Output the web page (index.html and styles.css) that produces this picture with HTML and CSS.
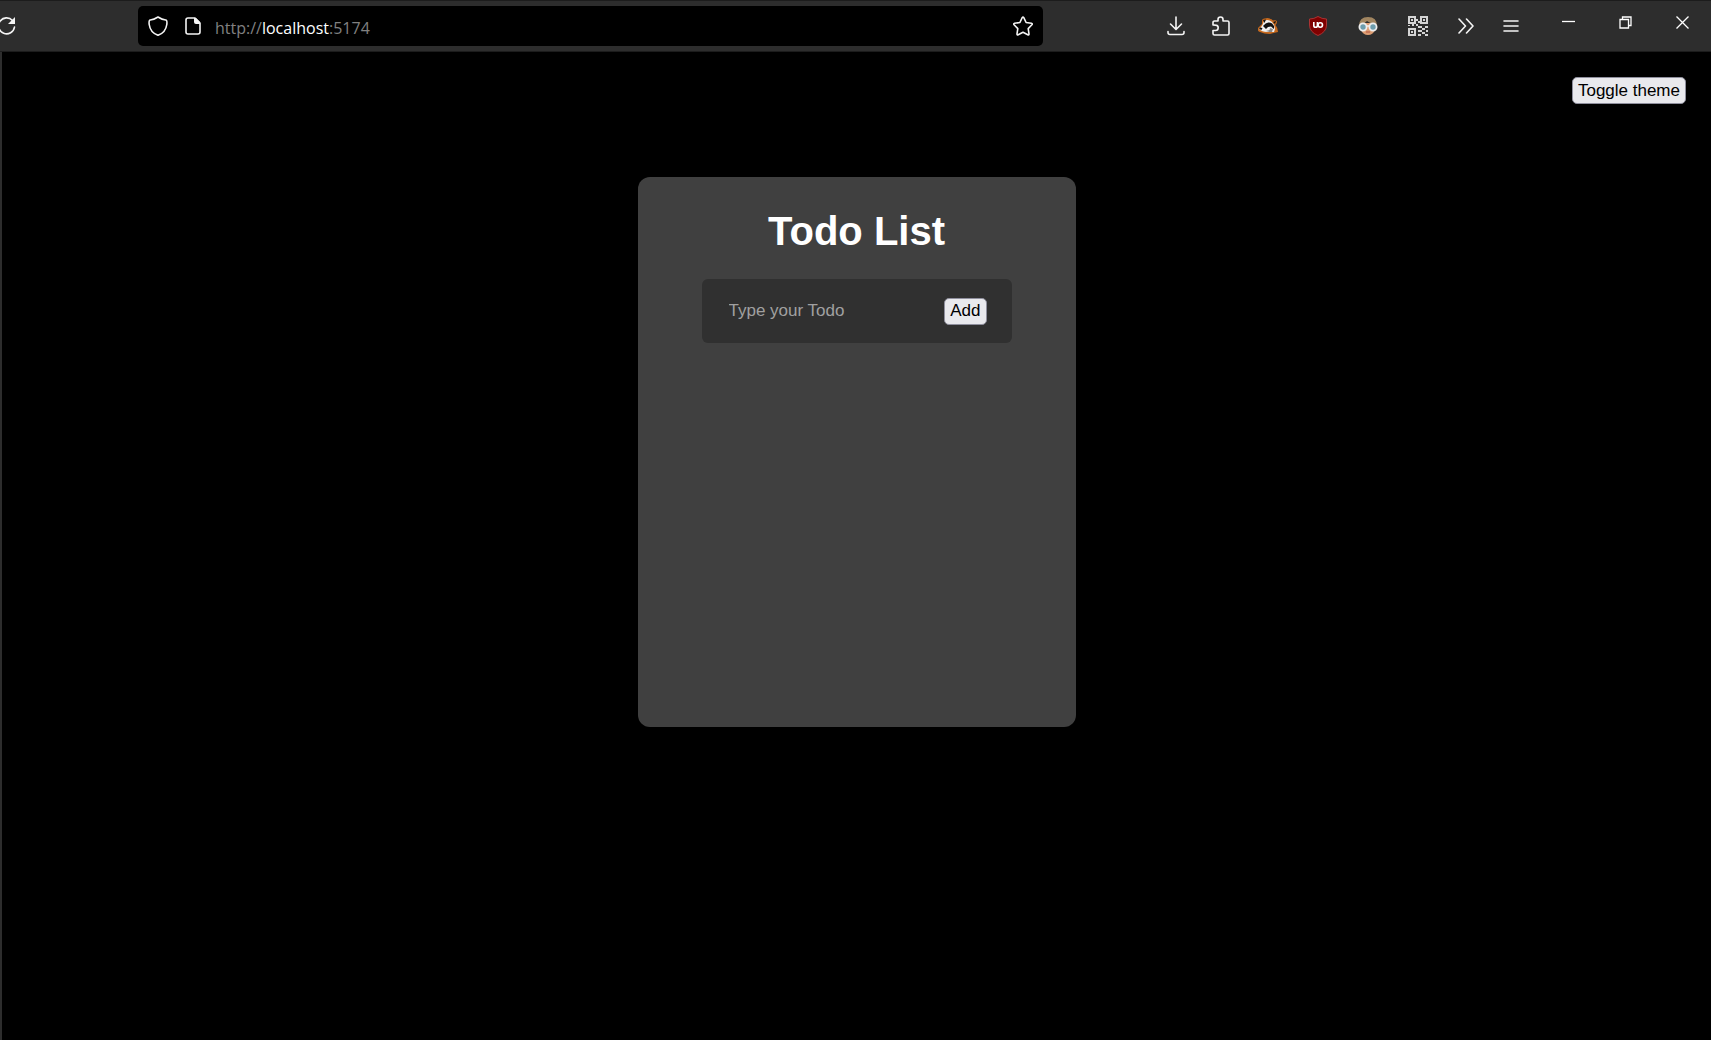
FILE: index.html
```html
<!DOCTYPE html>
<html lang="en">
<head>
<meta charset="utf-8">
<title>Todo List</title>
<link rel="stylesheet" href="styles.css">
</head>
<body>
<header class="toolbar">
  <button class="tool reload" aria-label="Reload">
    <svg width="20" height="20" viewBox="0 0 20 20"><path class="line" d="M17.500 11A8 8 0 1 1 15.500 4.500"/><path class="solid" d="M18 1v7h-7z"/></svg>
  </button>
  <div class="urlbar">
    <button class="bar-icon" aria-label="Tracking protection">
      <svg width="20" height="20" viewBox="0 0 20 20"><path class="line" d="M10 1C7 3 4.500 3.800 2.200 4c-1.500.2-1.300 2-1 4.500C1.800 13 5 17.500 10 19.300c5-1.800 8.200-6.300 8.800-10.800.3-2.500.5-4.300-1-4.500C15.500 3.800 13 3 10 1z"/></svg>
    </button>
    <button class="bar-icon" aria-label="Page information">
      <svg width="16" height="18" viewBox="0 0 16 18"><path class="line" d="M3 1h7l5 5v9a2 2 0 0 1-2 2H3a2 2 0 0 1-2-2V3a2 2 0 0 1 2-2z"/><path class="solid" d="M9 1h2l4 4v2h-4a2 2 0 0 1-2-2z"/></svg>
    </button>
    <div class="url">http://<span class="host">localhost</span>:5174</div>
    <button class="bar-icon" aria-label="Bookmark this page">
      <svg width="20" height="20" viewBox="0 0 20 20"><path class="line" d="M9.200 1.600q.8-1.200 1.600 0l2.300 4.900 5.300.8q1.400.4.500 1.500L15.200 12.600l.8 5.300q0 1.300-1.200.8L10 16.200l-4.800 2.500q-1.200.5-1.200-.8l.8-5.300L1.100 8.800Q.2 7.700 1.600 7.300l5.300-.8z"/></svg>
    </button>
  </div>
  <button class="tool" aria-label="Downloads">
    <svg width="18" height="20" viewBox="0 0 18 20"><path class="line" d="M9 1v12M3.500 8L9 13.500 14.500 8M1 15.500v1A2 2 0 0 0 3 18.500h12a2 2 0 0 0 2-2v-1"/></svg>
  </button>
  <button class="tool" aria-label="Extensions">
    <svg width="18" height="20" viewBox="0 0 18 20"><path class="line" d="M1 9V6.500A1.500 1.500 0 0 1 2.500 5H6V3.500a2.500 2.500 0 0 1 5 0V5h4.500A1.500 1.500 0 0 1 17 6.500V17.500A1.500 1.500 0 0 1 15.500 19h-13A1.500 1.500 0 0 1 1 17.500V14.500h2.500a2.700 2.700 0 0 0 0-5.400z"/></svg>
  </button>
  <button class="tool addon" aria-label="Privacy Badger">
    <svg width="20" height="18" viewBox="0 0 20 18"><path fill="#c86a1e" d="M4 3Q5 1 7 1.500 11 0 15 3.500q3-1 4 1 0 2-1.500 3.500 2.500 3 2.500 7-5 1-8 2-6 0-10-2-3-1-2-4 2-2 4-4z"/><path fill="#f0f0f0" d="M6 4q4-2.500 8 1 3 3 3 7l-1 3H9q-5 0-8-3 3-2 5-8z"/><path fill="#111" d="M5 3l3-.5L6.500 6zM2 10.500l2.500.5-1 2L1 12zM5 9q3-4 6-3.500 3 0 5 3.500v3l-3-2.500-3 .5-2 2zM15 5l3-1-1 3zM8 14l4-.5v1z"/><path fill="#888" d="M12 11l3 1-1 3h-3z"/></svg>
  </button>
  <button class="tool addon" aria-label="uBlock Origin">
    <svg width="18" height="20" viewBox="0 0 18 20"><path fill="#800000" stroke="#a33" d="M9 .5q4 2.500 8.500 2.500v6q0 7-8.500 10.500Q.5 16 .5 9V3Q5 3 9 .5z"/><path fill="none" stroke="#fff" stroke-width="1.600" d="M4.800 6v3.500a1.800 1.800 0 0 0 3.600 0V6M8.400 10.500V7.500"/><circle cx="11.300" cy="9" r="2.200" fill="none" stroke="#fff" stroke-width="1.600"/></svg>
  </button>
  <button class="tool addon" aria-label="Reader">
    <svg width="20" height="18" viewBox="0 0 20 18"><path fill="#dc9c72" d="M3 6h14v7q-2 5-7 5t-7-5z"/><path fill="#a18560" d="M1 9Q1 0 10 0t9 9h-4q-3-4-6-5Q7 5 5 9z"/><circle cx="5" cy="10" r="3.600" fill="#6d9dad" stroke="#eee" stroke-width="1.800"/><circle cx="15" cy="10" r="3.600" fill="#6d9dad" stroke="#eee" stroke-width="1.800"/><path stroke="#eee" stroke-width="1.500" d="M8 9h4"/><path stroke="#b2533e" d="M8 15h4"/></svg>
  </button>
  <button class="tool addon" aria-label="QR code">
    <svg width="20" height="20" viewBox="0 0 20 20" shape-rendering="crispEdges"><path fill="none" stroke="#d4d4d4" stroke-width="2" d="M1 1h6v6H1zM13 1h6v6h-6zM1 13h6v6H1z"/><path fill="#d4d4d4" d="M3 3h2v2H3zM15 3h2v2h-2zM3 15h2v2H3zM8 3h2v2H8zM10 5h2v2h-2zM0 9h2v1H0zM4 8h2v2H4zM8 8h2v2H8zM10 10h4v2h-4zM14 12h3v2h-3zM17 10h3v2h-3zM10 14h4v2h-4zM14 16h3v2h-3zM17 18h3v2h-3zM10 18h3v2h-3zM18 14h2v2h-2z"/></svg>
  </button>
  <button class="tool" aria-label="More tools">
    <svg width="16" height="16" viewBox="0 0 16 16"><path class="line" d="M1 1l6.500 7L1 15M8.500 1L15 8l-6.500 7"/></svg>
  </button>
  <button class="tool" aria-label="Open application menu">
    <svg width="16" height="14" viewBox="0 0 16 14"><path class="line" d="M1 2h14M1 7h14M1 12h14"/></svg>
  </button>
  <div class="window-controls">
    <button class="win" aria-label="Minimize"><svg width="13" height="13" viewBox="0 0 13 13"><path class="thin" d="M0 5.500h13"/></svg></button>
    <button class="win" aria-label="Restore"><svg width="13" height="13" viewBox="0 0 13 13"><path class="thin" d="M1 3.500h8.500v8.500H1zM3.500 3V1H12v8.500h-2"/></svg></button>
    <button class="win" aria-label="Close"><svg width="13" height="13" viewBox="0 0 13 13"><path class="thin" d="M.5.5l12 12M12.500.5l-12 12"/></svg></button>
  </div>
</header>
<main class="page">
  <div class="theme-row"><button class="button">Toggle theme</button></div>
  <section class="card">
    <h1 class="title">Todo List</h1>
    <form class="todo-form">
      <input class="todo-input" type="text" placeholder="Type your Todo" aria-label="Type your Todo">
      <button class="button" type="button">Add</button>
    </form>
  </section>
</main>
</body>
</html>
```
FILE: styles.css
```css
* { box-sizing: border-box; }

body {
  margin: 0;
  min-height: 100vh;
  display: flex;
  flex-direction: column;
  background: #000;
  color: #fff;
  font-family: "Liberation Sans", Arial, sans-serif;
}

button { font-family: inherit; }

.toolbar {
  display: flex;
  align-items: center;
  height: 52px;
  background: #2d2d2d;
  border-top: 1px solid #1c1c1c;
  border-bottom: 1px solid #1c1c1c;
  overflow: hidden;
}

.tool, .bar-icon, .win {
  flex: none;
  display: flex;
  align-items: center;
  justify-content: center;
  padding: 0;
  border: 0;
  background: none;
}

.tool { width: 45px; height: 40px; }
.addon { width: 50px; }
.reload { margin-left: -16px; }

.line {
  fill: none;
  stroke: #f4f4f4;
  stroke-width: 1.6;
  stroke-linecap: round;
  stroke-linejoin: round;
}
.solid { fill: #f4f4f4; }
.thin { fill: none; stroke: #fff; stroke-width: 1.3; }

.urlbar {
  flex: 1;
  display: flex;
  align-items: center;
  height: 40px;
  margin: 0 110px 0 109px;
  padding: 0 3px 0 2px;
  border-radius: 5px;
  background: #000;
}
.bar-icon { width: 35px; height: 40px; }
.url {
  flex: 1;
  padding: 3px 0 0 5px;
  font: 16px/24px "Open Sans", "Segoe UI", sans-serif;
  color: #808080;
}
.host { color: #fff; }

.window-controls {
  display: flex;
  align-self: flex-start;
  margin-left: 7px;
}
.win { width: 57px; height: 43px; }

.page {
  flex: 1;
  display: flex;
  flex-direction: column;
  align-items: center;
  padding: 25px;
  border-left: 2px solid #2d2d2d;
}

.theme-row {
  align-self: stretch;
  display: flex;
  justify-content: flex-end;
  margin-bottom: 73px;
}

.button {
  height: 27px;
  padding: 0 5px;
  border: 1px solid #8f8f9d;
  border-radius: 5px;
  background: #e9e9ed;
  color: #000;
  font-size: 17px;
  line-height: 20px;
}

.card {
  width: 438px;
  max-width: 100%;
  min-height: 550px;
  padding: 30px 64px;
  border-radius: 12px;
  background: #404040;
}

.title {
  margin: 0 0 24px;
  font-size: 40px;
  line-height: 48px;
  text-align: center;
}

.todo-form {
  display: flex;
  align-items: center;
  height: 64px;
  padding: 0 25px 0 27px;
  border-radius: 6px;
  background: #303030;
}

.todo-input {
  flex: 1;
  min-width: 0;
  padding: 0;
  border: 0;
  background: none;
  color: #fff;
  font: 17px/20px "Liberation Sans", Arial, sans-serif;
}
.todo-input::placeholder { color: #a0a0a0; }
```
